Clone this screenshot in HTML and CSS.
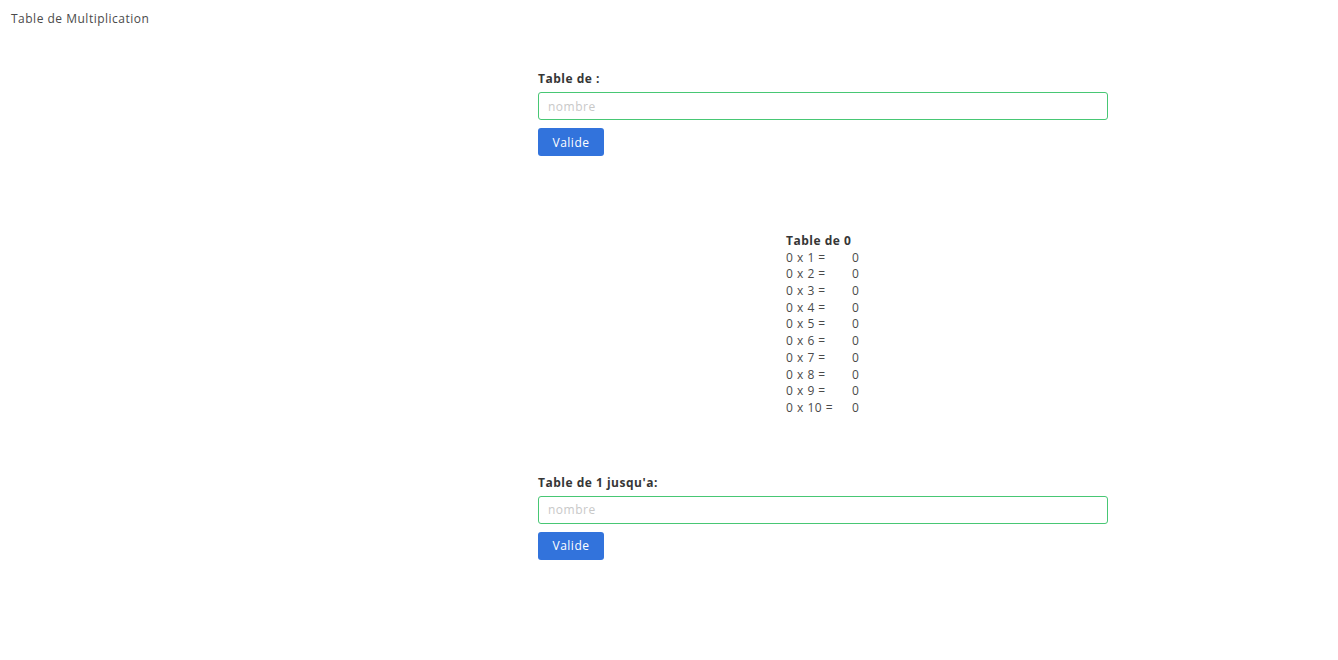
FILE: index.html
```html
<!DOCTYPE html>
<html lang="fr">
<head>
<meta charset="utf-8">
<title>Table de Multiplication</title>
<link rel="stylesheet" href="styles.css">
</head>
<body>
<header class="topbar">Table de Multiplication</header>
<main class="page">
  <section class="form-block first">
    <label class="label" for="n1">Table de :</label>
    <input class="input" id="n1" type="text" placeholder="nombre">
    <button class="button">Valide</button>
  </section>

  <section class="result">
    <div class="result-title">Table de 0</div>
    <div class="rows">
      <span>0 x 1 =</span><span>0</span>
      <span>0 x 2 =</span><span>0</span>
      <span>0 x 3 =</span><span>0</span>
      <span>0 x 4 =</span><span>0</span>
      <span>0 x 5 =</span><span>0</span>
      <span>0 x 6 =</span><span>0</span>
      <span>0 x 7 =</span><span>0</span>
      <span>0 x 8 =</span><span>0</span>
      <span>0 x 9 =</span><span>0</span>
      <span>0 x 10 =</span><span>0</span>
    </div>
  </section>

  <section class="form-block second">
    <label class="label" for="n2">Table de 1 jusqu'a:</label>
    <input class="input" id="n2" type="text" placeholder="nombre">
    <button class="button">Valide</button>
  </section>
</main>
</body>
</html>
```

FILE: styles.css
```css
* { box-sizing: border-box; }
html, body {
  margin: 0;
  padding: 0;
  background: #fff;
}
body {
  font-family: "Open Sans", "Noto Sans", "Liberation Sans", sans-serif;
  font-size: 12px;
  letter-spacing: 0.5px;
  color: #4a4a4a;
  width: 1338px;
  height: 660px;
  overflow: hidden;
}
.topbar {
  padding: 11px 0 0 11px;
  height: 27px;
  line-height: 16px;
  font-size: 12px;
  color: #4a4a4a;
}
.page {
  display: flex;
  flex-direction: column;
}
.form-block {
  margin-left: 538px;
  width: 570px;
  display: flex;
  flex-direction: column;
  align-items: flex-start;
}
.form-block.first { margin-top: 43px; }
.form-block.second { margin-top: 57px; }
.label {
  font-weight: 700;
  color: #363636;
  font-size: 12px;
  line-height: 16px;
  padding-top: 1px;
  margin-bottom: 5px;
}
.input {
  width: 570px;
  height: 28px;
  border: 1px solid #48c774;
  border-radius: 3px;
  padding: 0 9px;
  font-family: inherit;
  font-size: 12px;
  letter-spacing: 0.5px;
  color: #363636;
  outline: none;
  margin: 0 0 8px 0;
}
.input::placeholder { color: #c8c8c8; }
.button {
  width: 66px;
  height: 28px;
  border: none;
  border-radius: 3px;
  background: #3273dc;
  color: #fff;
  font-family: inherit;
  font-size: 12px;
  letter-spacing: 0.5px;
  padding: 0;
  cursor: pointer;
}
.result {
  margin-top: 77px;
  margin-left: 786px;
  display: flex;
  flex-direction: column;
}
.result-title {
  font-weight: 700;
  color: #363636;
  font-size: 12px;
  line-height: 16px;
  height: 16.7px;
}
.rows {
  display: grid;
  grid-template-columns: 66px auto;
  grid-auto-rows: 16.7px;
  line-height: 16.7px;
  font-size: 12px;
  color: #4a4a4a;
}
```
